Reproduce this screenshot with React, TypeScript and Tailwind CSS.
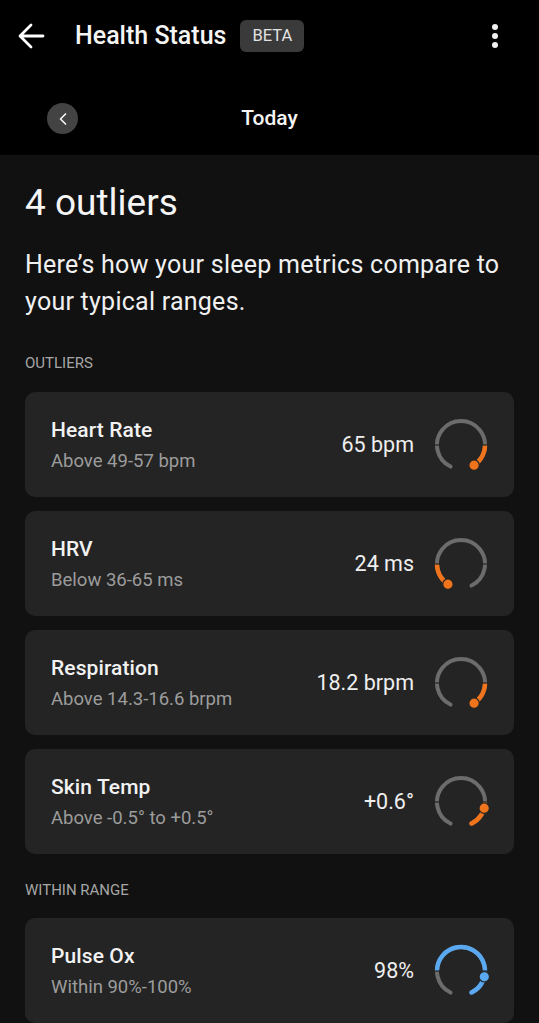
import { ChevronLeft } from "lucide-react";

type Metric = {
  name: string;
  range: string;
  value: string;
  color: string;
  from: number;
  to: number;
  dot: number;
};

const ORANGE = "#f0741c";
const BLUE = "#5aa9f0";

// gauge angles are degrees clockwise from 12 o'clock
const START = 206;
const END = 514;

const outliers: Metric[] = [
  { name: "Heart Rate", range: "Above 49-57 bpm", value: "65 bpm", color: ORANGE, from: 450, to: END, dot: 147 },
  { name: "HRV", range: "Below 36-65 ms", value: "24 ms", color: ORANGE, from: START, to: 270, dot: 213 },
  { name: "Respiration", range: "Above 14.3-16.6 brpm", value: "18.2 brpm", color: ORANGE, from: 450, to: END, dot: 147 },
  { name: "Skin Temp", range: "Above -0.5° to +0.5°", value: "+0.6°", color: ORANGE, from: 450, to: END, dot: 105 },
];

const inRange: Metric[] = [
  { name: "Pulse Ox", range: "Within 90%-100%", value: "98%", color: BLUE, from: 270, to: END, dot: 104 },
];

const R = 24;
const C = 28;

const pt = (deg: number, r = R) => {
  const a = (deg * Math.PI) / 180;
  return [C + r * Math.sin(a), C - r * Math.cos(a)];
};

const arc = (from: number, to: number) => {
  const [x1, y1] = pt(from);
  const [x2, y2] = pt(to);
  const large = to - from > 180 ? 1 : 0;
  return `M ${x1} ${y1} A ${R} ${R} 0 ${large} 1 ${x2} ${y2}`;
};

const Gauge = ({ m }: { m: Metric }) => {
  const [dx, dy] = pt(m.dot);
  const caps = [m.from, m.to].filter((a) => a === START || a === END);
  return (
    <svg width="56" height="56" viewBox="0 0 56 56" className="shrink-0">
      <path d={arc(START, END)} fill="none" stroke="#6c6c6c" strokeWidth="4" strokeLinecap="round" />
      <path d={arc(m.from, m.to)} fill="none" stroke={m.color} strokeWidth="4.5" />
      {caps.map((a) => {
        const [x, y] = pt(a);
        return <circle key={a} cx={x} cy={y} r="2.25" fill={m.color} />;
      })}
      {[270, 450].map((a) => {
        const [x1, y1] = pt(a, 21);
        const [x2, y2] = pt(a, 27);
        return <line key={a} x1={x1} y1={y1} x2={x2} y2={y2} stroke="#242424" strokeWidth="1.2" />;
      })}
      <circle cx={dx} cy={dy} r="5.2" fill={m.color} stroke="#242424" strokeWidth="1.2" />
    </svg>
  );
};

const MetricCard = ({ m }: { m: Metric }) => (
  <div className="flex h-[105px] items-center rounded-[10px] bg-[#242424] pl-[26px] pr-[25px]">
    <div className="flex flex-1 flex-col">
      <span className="text-[21px] leading-[28px] font-medium tracking-[0.1px] text-[#f2f2f2]">{m.name}</span>
      <span className="mt-[5px] text-[18.5px] leading-[24px] text-[#9c9c9c]">{m.range}</span>
    </div>
    <span className="mr-[19px] text-[21.5px] leading-[28px] text-[#eeeeee]">{m.value}</span>
    <Gauge m={m} />
  </div>
);

export default function App() {
  return (
    <div className="min-h-screen bg-[#111111] font-['Roboto',sans-serif] text-white">
      <header className="bg-black">
        <div className="flex h-[72px] items-center pl-[17px] pr-[40px]">
          <svg width="28" height="28" viewBox="0 0 28 28" className="shrink-0">
            <path
              d="M26 14H3.5M14 3L3 14l11 11"
              fill="none"
              stroke="#ffffff"
              strokeWidth="2.8"
              strokeLinecap="round"
              strokeLinejoin="round"
            />
          </svg>
          <h1 className="ml-[30px] text-[25px] font-medium text-[#f5f5f5]">Health Status</h1>
          <span className="ml-[14px] flex h-[32px] items-center rounded-[6px] bg-[#3a3a3a] px-[12px] text-[16.5px] text-[#e2e2e2]">
            BETA
          </span>
          <svg width="8" height="26" viewBox="0 0 8 26" className="ml-auto">
            <circle cx="4" cy="4" r="3" fill="#f0f0f0" />
            <circle cx="4" cy="13" r="3" fill="#f0f0f0" />
            <circle cx="4" cy="22" r="3" fill="#f0f0f0" />
          </svg>
        </div>
        <div className="grid h-[83px] grid-cols-[1fr_auto_1fr] items-center pt-[10px]">
          <div className="pl-[47px]">
            <button className="flex h-[31px] w-[31px] items-center justify-center rounded-full bg-[#434343]">
              <ChevronLeft size={20} strokeWidth={2} color="#f5f5f5" />
            </button>
          </div>
          <span className="text-[21px] font-medium text-[#f5f5f5]">Today</span>
          <div />
        </div>
      </header>

      <main className="px-[25px] pt-[26px] pb-[20px]">
        <h2 className="text-[37px] leading-[44px] text-[#f5f5f5]">4 outliers</h2>
        <p className="mt-[21px] text-[25px] leading-[37px] tracking-[0.25px] text-[#f0f0f0]">
          Here’s how your sleep metrics compare to your typical ranges.
        </p>

        <div className="mt-[33px] mb-[19px] text-[15px] leading-[20px] text-[#a6a6a6]">OUTLIERS</div>
        <div className="flex flex-col gap-[14px]">
          {outliers.map((m) => (
            <MetricCard key={m.name} m={m} />
          ))}
        </div>

        <div className="mt-[26px] mb-[18px] text-[15px] leading-[20px] text-[#a6a6a6]">WITHIN RANGE</div>
        <div className="flex flex-col gap-[14px]">
          {inRange.map((m) => (
            <MetricCard key={m.name} m={m} />
          ))}
        </div>
      </main>
    </div>
  );
}
